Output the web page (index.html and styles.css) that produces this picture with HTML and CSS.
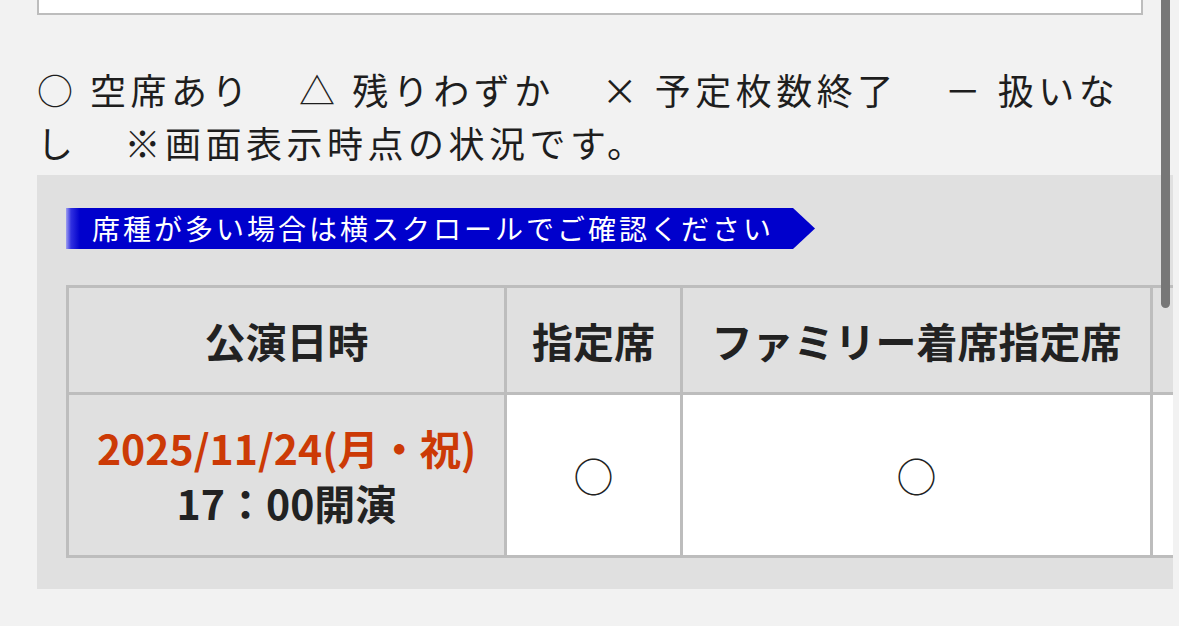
FILE: index.html
```html
<!DOCTYPE html>
<html lang="ja">
<head>
<meta charset="utf-8">
<title>公演日時</title>
<link rel="stylesheet" href="styles.css">
</head>
<body>
<div class="page">
  <div class="top-box"></div>
  <p class="legend">○ 空席あり<span class="sep">　</span>△ 残りわずか<span class="sep">　</span>× 予定枚数終了<span class="sep">　</span>－ 扱いなし<span class="sep">　</span>※画面表示時点の状況です。</p>
  <section class="panel">
    <div class="notice">席種が多い場合は横スクロールでご確認ください</div>
    <div class="table-scroll">
      <table class="seat-table">
        <colgroup>
          <col class="c-date">
          <col class="c-seat1">
          <col class="c-seat2">
          <col class="c-seat3">
        </colgroup>
        <thead>
          <tr>
            <th>公演日時</th>
            <th>指定席</th>
            <th>ファミリー着席指定席</th>
            <th></th>
          </tr>
        </thead>
        <tbody>
          <tr>
            <td class="date-cell"><span class="date">2025/11/24(月・祝)</span><br><span class="time">17：00開演</span></td>
            <td class="mark">○</td>
            <td class="mark">○</td>
            <td class="mark"></td>
          </tr>
        </tbody>
      </table>
    </div>
  </section>
</div>
<div class="scrollbar"></div>
</body>
</html>
```

FILE: styles.css
```css
html, body {
  margin: 0;
  padding: 0;
}
body {
  background: #f2f2f2;
  color: #222;
  font-family: "Noto Sans CJK JP", "Noto Sans", sans-serif;
  overflow: hidden;
  height: 626px;
}
.page {
  padding: 0 6px 0 37px;
}
.top-box {
  height: 13px;
  margin-right: 30px;
  background: #fff;
  border: 2px solid #bdbdbd;
  border-top: 0;
}
.legend {
  margin: 48px 30px 6px 0;
  font-size: 36px;
  line-height: 53px;
  letter-spacing: 4.5px;
  font-weight: 400;
  color: #1e1e1e;
}
.legend .sep {
  letter-spacing: 11px;
}
.panel {
  background: #e0e0e0;
  padding: 33px 0 31px 29px;
  overflow: hidden;
}
.notice {
  width: fit-content;
  height: 41px;
  line-height: 41px;
  padding: 0 41px 0 26px;
  font-size: 28px;
  letter-spacing: 3px;
  color: #fff;
  background: linear-gradient(to right, #a0a0f0 0, #3030e0 5px, #0000cc 14px, #0000cc 100%);
  clip-path: polygon(0 0, calc(100% - 22px) 0, 100% 50%, calc(100% - 22px) 100%, 0 100%);
}
.table-scroll {
  margin-top: 36px;
  overflow: hidden;
}
.seat-table {
  border-collapse: collapse;
  table-layout: fixed;
  width: 1304px;
}
.c-date { width: 438px; }
.c-seat1 { width: 176px; }
.c-seat2 { width: 470px; }
.c-seat3 { width: 220px; }
.seat-table th,
.seat-table td {
  border: 3px solid #bdbdbd;
  padding: 0;
  text-align: center;
  vertical-align: middle;
}
.seat-table th {
  height: 104px;
  background: #e0e0e0;
  font-size: 41px;
  font-weight: 700;
  white-space: nowrap;
  color: #222;
}
.seat-table td {
  height: 160px;
  background: #fff;
}
.seat-table td.date-cell {
  background: #e0e0e0;
  font-size: 41px;
  font-weight: 700;
  line-height: 55px;
}
.date {
  color: #cc3a06;
}
.time {
  color: #222;
}
.mark {
  font-size: 40px;
  font-weight: 400;
  color: #222;
}
.scrollbar {
  position: absolute;
  top: 0;
  left: 1161px;
  width: 9px;
  height: 308px;
  background: #777;
  border-radius: 0 0 5px 5px;
}
```
